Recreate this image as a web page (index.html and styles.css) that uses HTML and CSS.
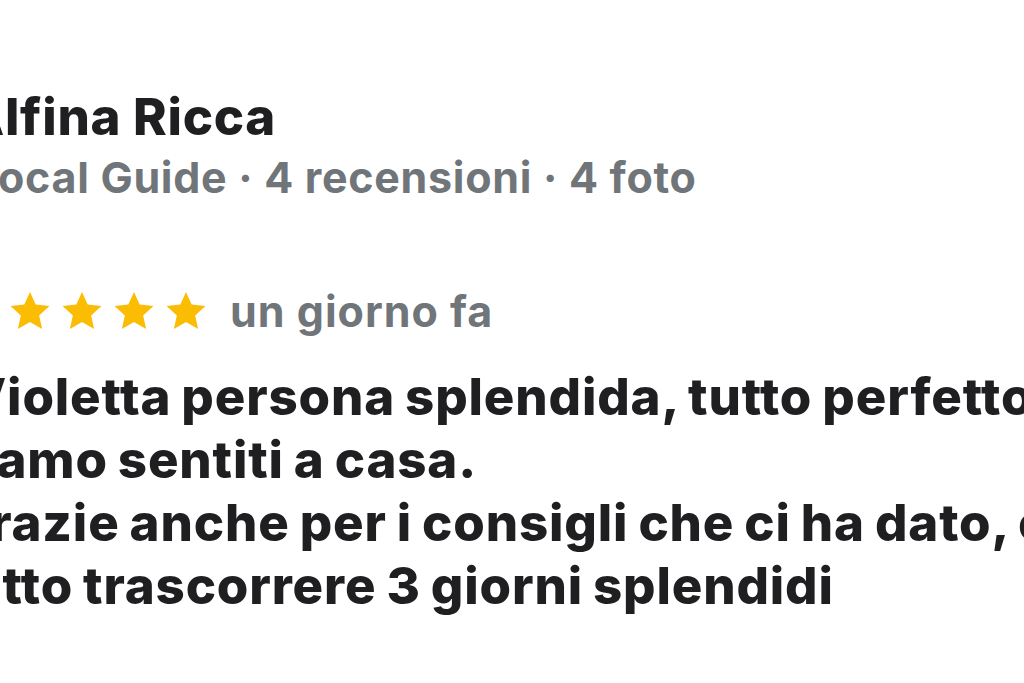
FILE: index.html
```html
<!DOCTYPE html>
<html lang="it">
<head>
  <meta charset="UTF-8">
  <meta name="viewport" content="width=device-width, initial-scale=1.0">
  <title>Recensione</title>
  <link rel="stylesheet" href="styles.css">
</head>
<body>

<div class="review">
  <div class="author">
    <div class="name">Alfina Ricca</div>
    <div class="meta">Local Guide · 4 recensioni · 4 foto</div>
  </div>

  <div class="rating">
    <div class="stars">
      <svg class="star" viewBox="0 0 24 24"><path d="M12 1.6l3.1 6.9 7.5.8-5.6 5.1 1.6 7.4L12 18 5.4 21.8 7 14.4 1.4 9.3l7.5-.8z"/></svg>
      <svg class="star" viewBox="0 0 24 24"><path d="M12 1.6l3.1 6.9 7.5.8-5.6 5.1 1.6 7.4L12 18 5.4 21.8 7 14.4 1.4 9.3l7.5-.8z"/></svg>
      <svg class="star" viewBox="0 0 24 24"><path d="M12 1.6l3.1 6.9 7.5.8-5.6 5.1 1.6 7.4L12 18 5.4 21.8 7 14.4 1.4 9.3l7.5-.8z"/></svg>
      <svg class="star" viewBox="0 0 24 24"><path d="M12 1.6l3.1 6.9 7.5.8-5.6 5.1 1.6 7.4L12 18 5.4 21.8 7 14.4 1.4 9.3l7.5-.8z"/></svg>
      <svg class="star" viewBox="0 0 24 24"><path d="M12 1.6l3.1 6.9 7.5.8-5.6 5.1 1.6 7.4L12 18 5.4 21.8 7 14.4 1.4 9.3l7.5-.8z"/></svg>
    </div>
    <span class="date">un giorno fa</span>
  </div>

  <p class="text">Violetta persona splendida, tutto perfetto, ci<br>siamo sentiti a casa.<br>Grazie anche per i consigli che ci ha dato, ci ha<br>fatto trascorrere 3 giorni splendidi</p>
</div>

</body>
</html>
```

FILE: styles.css
```css
body {
  --text-color: #1f1f22;
  --muted-color: #70757a;
  --star-color: #fbbc04;

  margin: 0;
  background: #fff;
  font-family: Inter, 'Noto Sans', Arial, sans-serif;
  color: var(--text-color);
  overflow: hidden;
}

.review {
  margin-left: -44px;
  padding-top: 87px;
  white-space: nowrap;
}

.author {
  padding-left: 17px;
}

.name {
  margin-left: -8px;
  font-size: 51px;
  line-height: 60px;
  font-weight: 800;
  letter-spacing: 0.7px;
}

.meta {
  margin-top: 5px;
  font-size: 43px;
  line-height: 50px;
  font-weight: 700;
  letter-spacing: 0.7px;
  color: var(--muted-color);
}

.rating {
  display: flex;
  align-items: center;
  gap: 22px;
  margin-top: 84px;
  height: 50px;
}

.stars {
  display: flex;
  gap: 8px;
}

.star {
  width: 44px;
  height: 44px;
  fill: var(--star-color);
}

.date {
  font-size: 43px;
  line-height: 50px;
  font-weight: 700;
  letter-spacing: 1px;
  color: var(--muted-color);
}

.text {
  margin: 29px 0 0 -5px;
  font-size: 51px;
  line-height: 63px;
  font-weight: 800;
  letter-spacing: 0.85px;
  word-spacing: -2px;
  text-indent: 16px;
}
```
